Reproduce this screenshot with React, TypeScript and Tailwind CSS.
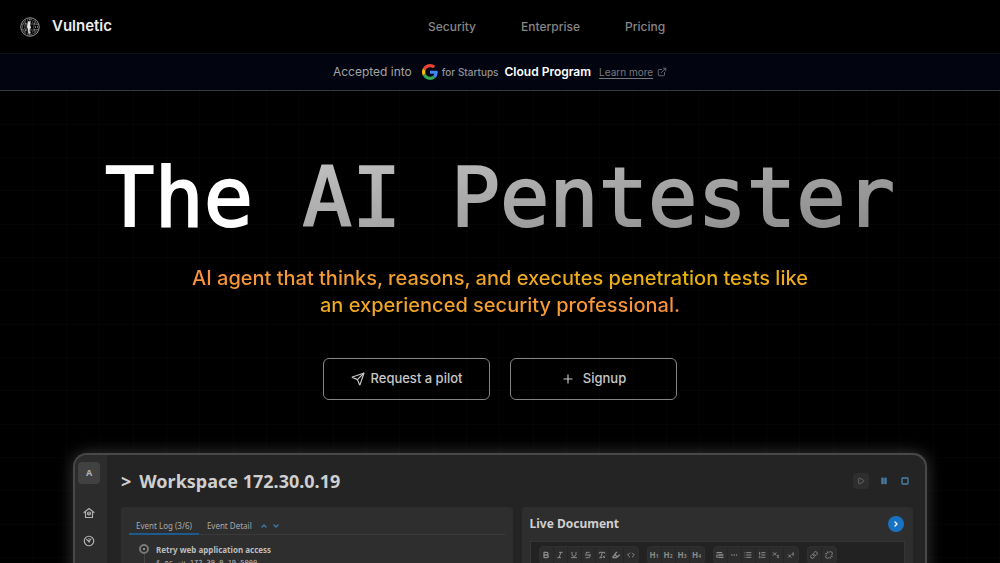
import {
  Bold,
  ChevronDown,
  ChevronRight,
  ChevronUp,
  Code,
  Ellipsis,
  ExternalLink,
  Highlighter,
  Italic,
  Link,
  List,
  ListOrdered,
  Pause,
  Play,
  Plus,
  RemoveFormatting,
  Send,
  Square,
  Strikethrough,
  Subscript,
  Superscript,
  TextQuote,
  Underline,
  Unlink,
} from "lucide-react";
import type { ReactNode } from "react";

const navLinks = ["Security", "Enterprise", "Pricing"];

const Logo = () => (
  <svg viewBox="0 0 40 40" className="size-5" fill="none" stroke="#a8a8a8" aria-hidden="true">
    <circle cx="20" cy="20" r="18.5" strokeWidth="1.8" />
    <circle cx="20" cy="20" r="15" strokeWidth="2" strokeDasharray="2 2" />
    <circle cx="20" cy="20" r="11" strokeWidth="2" strokeDasharray="2 3" />
    <path d="M20 2v36M3 14h34M3 26h34M8 7c6 8 6 18 0 26M32 7c-6 8-6 18 0 26" strokeWidth="1" />
    <path d="M17 8l4 2-1 6 2 5-3 4 1 8-3 1-1-9-2-5 1-7z" fill="#e5e5e5" stroke="none" />
  </svg>
);

const GoogleIcon = () => (
  <svg viewBox="0 0 48 48" className="size-4" aria-hidden="true">
    <path fill="#EA4335" d="M24 9.5c3.54 0 6.71 1.22 9.21 3.6l6.85-6.85C35.9 2.38 30.47 0 24 0 14.62 0 6.51 5.38 2.56 13.22l7.98 6.19C12.43 13.72 17.74 9.5 24 9.5z" />
    <path fill="#4285F4" d="M46.98 24.55c0-1.57-.15-3.09-.38-4.55H24v9.02h12.94c-.58 2.96-2.26 5.48-4.78 7.18l7.73 6c4.51-4.18 7.09-10.36 7.09-17.65z" />
    <path fill="#FBBC05" d="M10.53 28.59c-.48-1.45-.76-2.99-.76-4.59s.27-3.14.76-4.59l-7.98-6.19C.92 16.46 0 20.12 0 24c0 3.88.92 7.54 2.56 10.78l7.97-6.19z" />
    <path fill="#34A853" d="M24 48c6.48 0 11.93-2.13 15.89-5.81l-7.73-6c-2.15 1.45-4.92 2.3-8.16 2.3-6.26 0-11.57-4.22-13.47-9.91l-7.98 6.19C6.51 42.62 14.62 48 24 48z" />
  </svg>
);

const HomeIcon = () => (
  <svg viewBox="0 0 24 24" className="size-3" fill="none" stroke="currentColor" strokeWidth="2.4" strokeLinecap="round" strokeLinejoin="round" aria-hidden="true">
    <path d="M2 11 12 3l10 8" />
    <path d="M5 9v12h14V9" />
    <circle cx="12" cy="13" r="3" />
    <path d="M12 13v2" />
  </svg>
);

const GaugeIcon = () => (
  <svg viewBox="0 0 24 24" className="size-3" fill="none" stroke="currentColor" strokeWidth="2.4" strokeLinecap="round" aria-hidden="true">
    <circle cx="12" cy="12" r="9.5" />
    <path d="M7 9l5 4 4-5M12 7v1" />
    <circle cx="12" cy="13" r="1" />
  </svg>
);

const Heading = ({ level }: { level: number }) => (
  <span className="text-[8px] font-bold leading-none">
    H<span className="text-[5px]">{level}</span>
  </span>
);

const icon = "size-2";

const toolGroups: { label: string; content: ReactNode }[][] = [
  [
    { label: "Bold", content: <Bold className={icon} strokeWidth={4} /> },
    { label: "Italic", content: <Italic className={icon} strokeWidth={3} /> },
    { label: "Underline", content: <Underline className={icon} strokeWidth={3} /> },
    { label: "Strikethrough", content: <Strikethrough className={icon} strokeWidth={3} /> },
    { label: "Clear formatting", content: <RemoveFormatting className={icon} strokeWidth={3} /> },
    { label: "Highlight", content: <Highlighter className={icon} strokeWidth={4} /> },
    { label: "Code", content: <Code className={icon} strokeWidth={3} /> },
  ],
  [1, 2, 3, 4].map((level) => ({
    label: `Heading ${level}`,
    content: <Heading level={level} />,
  })),
  [
    { label: "Quote", content: <TextQuote className={icon} strokeWidth={4} /> },
    { label: "Divider", content: <Ellipsis className={icon} /> },
    { label: "Bullet list", content: <List className={icon} strokeWidth={3} /> },
    { label: "Numbered list", content: <ListOrdered className={icon} strokeWidth={3} /> },
    { label: "Subscript", content: <Subscript className={icon} strokeWidth={3} /> },
    { label: "Superscript", content: <Superscript className={icon} strokeWidth={3} /> },
  ],
  [
    { label: "Link", content: <Link className={icon} strokeWidth={3} /> },
    { label: "Unlink", content: <Unlink className={icon} strokeWidth={3} /> },
  ],
];

const Header = () => (
  <header className="flex h-[53px] items-center px-5">
    <a href="#" className="flex w-[42.5%] items-center gap-3">
      <Logo />
      <span className="text-[15px] font-semibold text-[#ededed]">Vulnetic</span>
    </a>
    <nav className="flex gap-[45px]">
      {navLinks.map((name) => (
        <a key={name} href="#" className="text-xs font-medium text-[#858585]">
          {name}
        </a>
      ))}
    </nav>
  </header>
);

const Banner = () => (
  <div className="flex h-[38px] items-center justify-center border-t border-b border-t-[#0c0f16] border-b-[#3a3a3c] bg-[#020510]">
    <span className="mr-2.5 text-xs text-[#a3a3a3]">Accepted into</span>
    <GoogleIcon />
    <span className="ml-1 text-[10px] font-medium text-[#8f9299]">for Startups</span>
    <span className="ml-1.5 text-xs font-semibold text-white">Cloud Program</span>
    <a href="#" className="ml-2 flex items-center gap-1 text-[10px] text-[#75777d]">
      <span className="underline underline-offset-2">Learn more</span>
      <ExternalLink className="size-2.5" />
    </a>
  </div>
);

const Sidebar = () => (
  <aside className="flex w-8 shrink-0 flex-col items-center bg-[#2c2c2c] pt-[7px] pr-1 text-[#b0b0b0]">
    <button type="button" className="size-[22px] rounded bg-[#414141] text-[9px] font-bold">
      A
    </button>
    <a href="#" aria-label="Home" className="mt-[23px]">
      <HomeIcon />
    </a>
    <a href="#" aria-label="Dashboard" className="mt-4">
      <GaugeIcon />
    </a>
  </aside>
);

const EventLog = () => (
  <section className="min-w-0 flex-1 rounded-t-sm bg-[#2e2e2e] px-2 pt-[11px]">
    <div className="flex items-center border-b border-[#3a3a3a] text-[8px] text-[#a8a8a8]">
      <button type="button" className="-mb-px h-4 border-b-2 border-[#1f5a8c] px-[7px]">
        Event Log (3/6)
      </button>
      <button type="button" className="h-4 px-2">
        Event Detail
      </button>
      <button type="button" aria-label="Previous event">
        <ChevronUp className="size-2 text-[#3a7cb0]" strokeWidth={4} />
      </button>
      <button type="button" aria-label="Next event" className="ml-1">
        <ChevronDown className="size-2 text-[#3a7cb0]" strokeWidth={4} />
      </button>
    </div>
    <div className="mt-2 flex gap-[7px] pl-2.5">
      <div className="flex w-2.5 flex-col items-center">
        <span className="mt-px flex size-2.5 items-center justify-center rounded-full border-2 border-[#777]">
          <span className="size-0.5 rounded-full bg-[#aaa]" />
        </span>
        <span className="w-px flex-1 bg-[#444]" />
      </div>
      <div className="text-[#bdbdbd]">
        <p className="text-[8px] leading-[14px] font-bold">Retry web application access</p>
        <p className="font-['DejaVu_Sans_Mono',monospace] text-[7px] leading-[12px]">
          $ nc -v 172.30.0.19 5000
        </p>
      </div>
    </div>
  </section>
);

const LiveDocument = () => (
  <section className="min-w-0 flex-1 rounded-t-sm bg-[#2e2e2e] px-2 pt-2">
    <div className="flex items-center justify-between pr-px">
      <h3 className="text-[12px] leading-[18px] font-bold text-[#cfcfcf]">Live Document</h3>
      <button
        type="button"
        aria-label="Open document"
        className="flex size-4 items-center justify-center rounded-full bg-[#1971c2] text-white"
      >
        <ChevronRight className="size-2" strokeWidth={4} />
      </button>
    </div>
    <div className="mt-2 flex gap-2 border border-[#353535] bg-[#222] px-2 pt-1 pb-10">
      {toolGroups.map((group, i) => (
        <div key={i} className="flex rounded-sm border border-[#303030] bg-[#2c2c2c]">
          {group.map((tool) => (
            <button
              key={tool.label}
              type="button"
              aria-label={tool.label}
              className="flex h-4 w-[14px] items-center justify-center border-r border-[#262626] text-[#8a8a8a] last:border-r-0"
            >
              {tool.content}
            </button>
          ))}
        </div>
      ))}
    </div>
  </section>
);

const Workspace = () => (
  <div className="mx-auto flex w-[854px] max-w-full overflow-hidden rounded-t-[14px] border-2 border-b-0 border-[#484848] bg-[#242424] font-['Noto_Sans',sans-serif] shadow-[0_0_16px_rgba(255,255,255,0.22)]">
    <Sidebar />
    <div className="min-w-0 flex-1 pt-3 pr-3 pl-3.5">
      <div className="flex items-center justify-between pr-0.5">
        <h2 className="flex gap-2 text-lg leading-7 font-bold text-[#cfcfcf]">
          <span>&gt;</span>
          <span>Workspace 172.30.0.19</span>
        </h2>
        <div className="flex items-center gap-[9px] text-[#4a7fa8]">
          <button
            type="button"
            aria-label="Start"
            className="flex size-4 items-center justify-center rounded-sm bg-[#2e2e2e] text-[#666]"
          >
            <Play className="size-2" strokeWidth={3} />
          </button>
          <button type="button" aria-label="Pause" className="flex w-3 justify-center">
            <Pause className="size-2" fill="currentColor" />
          </button>
          <button type="button" aria-label="Stop" className="flex w-3 justify-center">
            <Square className="size-2" strokeWidth={4} />
          </button>
        </div>
      </div>
      <div className="mt-3 flex gap-[9px]">
        <EventLog />
        <LiveDocument />
      </div>
    </div>
  </div>
);

const Hero = () => (
  <main className="bg-[linear-gradient(to_right,transparent_33px,#ffffff04_33px_34px,transparent_34px_66px,#ffffff04_66px_67px,transparent_67px_99px,#ffffff04_99px),linear-gradient(to_bottom,transparent_33px,#ffffff04_33px_34px,transparent_34px_66px,#ffffff04_66px_67px,transparent_67px_99px,#ffffff04_99px)] bg-size-[100px_100px] px-6 pt-[59px]">
    <h1 className="text-center font-['DejaVu_Sans_Mono',monospace] text-[82px] leading-[96px] whitespace-nowrap text-white [-webkit-text-stroke:2px_white]">
      The{" "}
      <span className="bg-linear-to-br from-[#c4c4c4] to-[#858585] bg-clip-text text-transparent [-webkit-text-stroke:2px_transparent]">
        AI Pentester
      </span>
    </h1>
    <p className="mx-auto mt-[19px] max-w-[640px] text-center text-xl leading-[27px] font-medium">
      <span className="bg-linear-to-r from-[#fb923c] via-[#eab308] to-[#fb923c] bg-clip-text text-transparent">
        AI agent that thinks, reasons, and executes penetration tests like an experienced security
        professional.
      </span>
    </p>
    <div className="mt-[39px] flex justify-center gap-5 text-[13px] font-medium text-[#c8c8c8]">
      <button
        type="button"
        className="flex h-[42px] w-[167px] items-center justify-center gap-1.5 rounded-md border border-[#858585]"
      >
        <Send className="size-[14px]" />
        Request a pilot
      </button>
      <button
        type="button"
        className="flex h-[42px] w-[167px] items-center justify-center gap-2 rounded-md border border-[#858585]"
      >
        <Plus className="size-[14px]" />
        Signup
      </button>
    </div>
    <div className="mt-[53px]">
      <Workspace />
    </div>
  </main>
);

const App = () => {
  return (
    <div className="h-screen overflow-hidden bg-black font-['Inter',sans-serif]">
      <Header />
      <Banner />
      <Hero />
    </div>
  );
};

export default App;
